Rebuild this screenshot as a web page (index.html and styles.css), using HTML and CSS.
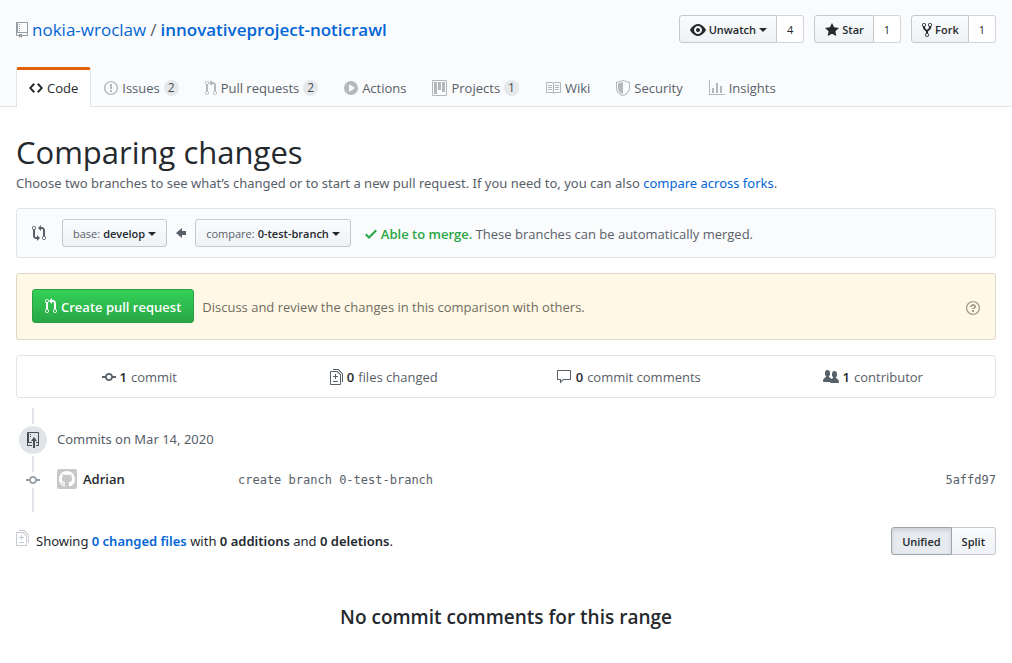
FILE: index.html
```html
<!DOCTYPE html>
<html lang="en">
<head>
<meta charset="utf-8">
<meta name="viewport" content="width=device-width, initial-scale=1">
<title>Comparing develop...0-test-branch</title>
<link rel="stylesheet" href="styles.css">
</head>
<body>
<svg class="sprite" aria-hidden="true">
  <symbol id="pull" viewBox="0 0 12 16"><path d="M11 11.28V5c-.03-.78-.34-1.47-.94-2.06C9.46 2.35 8.78 2.03 8 2H7V0L4 3l3 3V4h1c.27.02.48.11.69.31.21.2.3.42.31.69v6.28A1.993 1.993 0 0010 15a1.993 1.993 0 001-3.72zm-1 2.92c-.66 0-1.2-.55-1.2-1.2 0-.65.55-1.2 1.2-1.2.65 0 1.2.55 1.2 1.2 0 .65-.55 1.2-1.2 1.2zM4 3c0-1.11-.89-2-2-2a1.993 1.993 0 00-1 3.72v6.56A1.993 1.993 0 002 15a1.993 1.993 0 001-3.72V4.72c.59-.34 1-.98 1-1.72zm-.8 10c0 .66-.55 1.2-1.2 1.2-.65 0-1.2-.55-1.2-1.2 0-.65.55-1.2 1.2-1.2.65 0 1.2.55 1.2 1.2zM2 4.2C1.34 4.2.8 3.65.8 3c0-.65.55-1.2 1.2-1.2.65 0 1.2.55 1.2 1.2 0 .65-.55 1.2-1.2 1.2z"/></symbol>
  <symbol id="commit" viewBox="0 0 14 16"><path d="M10.86 7c-.45-1.72-2-3-3.86-3-1.86 0-3.41 1.28-3.86 3H0v2h3.14c.45 1.72 2 3 3.86 3 1.86 0 3.41-1.28 3.86-3H14V7h-3.14zM7 10.2c-1.22 0-2.2-.98-2.2-2.2 0-1.22.98-2.2 2.2-2.2 1.22 0 2.2.98 2.2 2.2 0 1.22-.98 2.2-2.2 2.2z"/></symbol>
  <symbol id="diff" viewBox="0 0 13 16"><path d="M6 7h2v1H6v2H5V8H3V7h2V5h1v2zm-3 6h5v-1H3v1zM7.5 2L11 5.5V15c0 .55-.45 1-1 1H1c-.55 0-1-.45-1-1V3c0-.55.45-1 1-1h6.5zM10 6L7 3H1v12h9V6zM8.5 0H3v1h5l4 4v8h1V4.5L8.5 0z"/></symbol>
</svg>
<header class="page-head">
  <div class="title-row">
    <div class="repo-title">
      <svg class="icon icon-muted" width="12" height="16" viewBox="0 0 12 16" aria-hidden="true"><path d="M4 9H3V8h1v1zm0-3H3v1h1V6zm0-2H3v1h1V4zm0-2H3v1h1V2zm8-1v12c0 .55-.45 1-1 1H6v2l-1.5-1.5L3 16v-2H1c-.55 0-1-.45-1-1V1c0-.55.45-1 1-1h10c.55 0 1 .45 1 1zm-1 10H1v2h2v-1h3v1h5v-2zm0-10H2v9h9V1z"/></svg>
      <a href="#owner">nokia-wroclaw</a><span>/</span><a class="strong" href="#repo">innovativeproject-noticrawl</a>
    </div>
    <div class="repo-actions">
      <div class="btn-group">
        <button class="btn btn-sm" type="button" aria-haspopup="true"><svg class="icon" width="16" height="16" viewBox="0 0 16 16" aria-hidden="true"><path d="M8.06 2C3 2 0 8 0 8s3 6 8.06 6C13 14 16 8 16 8s-3-6-7.94-6zM8 12c-2.2 0-4-1.78-4-4 0-2.2 1.8-4 4-4 2.22 0 4 1.8 4 4 0 2.22-1.78 4-4 4zm2-4c0 1.11-.89 2-2 2-1.11 0-2-.89-2-2 0-1.11.89-2 2-2 1.11 0 2 .89 2 2z"/></svg>Unwatch<span class="caret"></span></button>
        <a class="count" href="#watchers">4</a>
      </div>
      <div class="btn-group">
        <button class="btn btn-sm" type="button"><svg class="icon" width="14" height="16" viewBox="0 0 14 16" aria-hidden="true"><path d="M14 6l-4.9-.64L7 1 4.9 5.36 0 6l3.6 3.26L2.67 14 7 11.67 11.33 14l-.93-4.74L14 6z"/></svg>Star</button>
        <a class="count" href="#stars">1</a>
      </div>
      <div class="btn-group">
        <button class="btn btn-sm" type="button"><svg class="icon" width="10" height="16" viewBox="0 0 10 16" aria-hidden="true"><path d="M8 1a1.993 1.993 0 00-1 3.72V6L5 8 3 6V4.72A1.993 1.993 0 002 1a1.993 1.993 0 00-1 3.72V6.5l3 3v1.78A1.993 1.993 0 005 15a1.993 1.993 0 001-3.72V9.5l3-3V4.72A1.993 1.993 0 008 1zM2 4.2C1.34 4.2.8 3.65.8 3c0-.65.55-1.2 1.2-1.2.65 0 1.2.55 1.2 1.2 0 .65-.55 1.2-1.2 1.2zm3 10c-.66 0-1.2-.55-1.2-1.2 0-.65.55-1.2 1.2-1.2.65 0 1.2.55 1.2 1.2 0 .65-.55 1.2-1.2 1.2zm3-10c-.66 0-1.2-.55-1.2-1.2 0-.65.55-1.2 1.2-1.2.65 0 1.2.55 1.2 1.2 0 .65-.55 1.2-1.2 1.2z"/></svg>Fork</button>
        <a class="count" href="#forks">1</a>
      </div>
    </div>
  </div>
  <nav class="tabs" aria-label="Repository">
    <a class="tab current" href="#code" aria-current="page"><svg class="icon" width="14" height="16" viewBox="0 0 14 16" aria-hidden="true"><path d="M9.5 3L8 4.5 11.5 8 8 11.5 9.5 13 14 8 9.5 3zm-5 0L0 8l4.5 5L6 11.5 2.5 8 6 4.5 4.5 3z"/></svg>Code</a>
    <a class="tab" href="#issues"><svg class="icon" width="14" height="16" viewBox="0 0 14 16" aria-hidden="true"><path d="M7 2.3c3.14 0 5.7 2.56 5.7 5.7s-2.56 5.7-5.7 5.7A5.71 5.71 0 011.3 8c0-3.14 2.56-5.7 5.7-5.7zM7 1C3.14 1 0 4.14 0 8s3.14 7 7 7 7-3.14 7-7-3.14-7-7-7zm1 3H6v5h2V4zm0 6H6v2h2v-2z"/></svg>Issues<span class="counter">2</span></a>
    <a class="tab" href="#pulls"><svg class="icon" width="12" height="16" aria-hidden="true"><use href="#pull"/></svg>Pull requests<span class="counter">2</span></a>
    <a class="tab" href="#actions"><svg class="icon" width="14" height="16" viewBox="0 0 14 16" aria-hidden="true"><path d="M14 8A7 7 0 110 8a7 7 0 0114 0zm-8.223 3.482l4.599-3.066a.5.5 0 000-.832L5.777 4.518A.5.5 0 005 4.934v6.132a.5.5 0 00.777.416z" fill-rule="evenodd"/></svg>Actions</a>
    <a class="tab" href="#projects"><svg class="icon" width="15" height="16" viewBox="0 0 15 16" aria-hidden="true"><path fill-rule="evenodd" d="M10 12h3V2h-3v10zm-4-2h3V2H6v8zm-4 4h3V2H2v12zm-1 1h13V1H1v14zM14 0H1a1 1 0 00-1 1v14a1 1 0 001 1h13a1 1 0 001-1V1a1 1 0 00-1-1z"/></svg>Projects<span class="counter">1</span></a>
    <a class="tab" href="#wiki"><svg class="icon" width="16" height="16" viewBox="0 0 16 16" aria-hidden="true"><path fill-rule="evenodd" d="M3 5h4v1H3V5zm0 3h4V7H3v1zm0 2h4V9H3v1zm11-5h-4v1h4V5zm0 2h-4v1h4V7zm0 2h-4v1h4V9zm2-6v9c0 .55-.45 1-1 1H9.5l-1 1-1-1H2c-.55 0-1-.45-1-1V3c0-.55.45-1 1-1h5.5l1 1 1-1H15c.55 0 1 .45 1 1zm-8 .5L7.5 3H2v9h6V3.5zm7-.5H9.5l-.5.5V12h6V3z"/></svg>Wiki</a>
    <a class="tab" href="#security"><svg class="icon" width="14" height="16" viewBox="0 0 14 16" aria-hidden="true"><path fill-rule="evenodd" d="M0 2l7-2 7 2v6.02C14 12.69 8.69 16 7 16c-1.69 0-7-3.31-7-7.98V2zm1 .75L7 1l6 1.75v5.268C13 12.104 8.449 15 7 15c-1.449 0-6-2.896-6-6.982V2.75zm1 .75L7 2v12c-1.207 0-5-2.482-5-5.985V3.5z"/></svg>Security</a>
    <a class="tab" href="#insights"><svg class="icon" width="16" height="16" viewBox="0 0 16 16" aria-hidden="true"><path d="M16 14v1H0V0h1v14h15zM5 13H3V8h2v5zm4 0H7V3h2v10zm4 0h-2V6h2v7z"/></svg>Insights</a>
  </nav>
</header>
<main class="content">
  <h1 class="heading">Comparing changes</h1>
  <p class="lead">Choose two branches to see what’s changed or to start a new pull request. If you need to, you can also <a href="#forks-compare">compare across forks</a>.</p>

  <section class="range" aria-label="Branches">
    <svg class="icon range-icon" width="14" height="16" viewBox="0 0 14 16" aria-hidden="true"><path d="M5 12H4c-.27-.02-.48-.11-.69-.31-.21-.2-.3-.42-.31-.69V4.72A1.993 1.993 0 002 1a1.993 1.993 0 00-1 3.72V11c.03.78.34 1.47.94 2.06.6.59 1.28.91 2.06.94h1v2l3-3-3-3v2zM2 1.8c.66 0 1.2.55 1.2 1.2 0 .65-.55 1.2-1.2 1.2C1.35 4.2.8 3.65.8 3c0-.65.55-1.2 1.2-1.2zm11 9.48V5c-.03-.78-.34-1.47-.94-2.06-.6-.59-1.28-.91-2.06-.94H9V0L6 3l3 3V4h1c.27.02.48.11.69.31.21.2.3.42.31.69v6.28A1.993 1.993 0 0012 15a1.993 1.993 0 001-3.72zm-1 2.92c-.66 0-1.2-.55-1.2-1.2 0-.65.55-1.2 1.2-1.2.65 0 1.2.55 1.2 1.2 0 .65-.55 1.2-1.2 1.2z"/></svg>
    <button class="btn btn-sm" type="button" aria-haspopup="true"><span class="label">base:</span>develop<span class="caret"></span></button>
    <svg class="icon range-arrow" width="10" height="16" viewBox="0 0 10 16" aria-hidden="true"><path d="M6 3L0 8l6 5v-3h4V6H6V3z"/></svg>
    <button class="btn btn-sm" type="button" aria-haspopup="true"><span class="label">compare:</span>0-test-branch<span class="caret"></span></button>
    <p class="merge"><svg class="icon" width="12" height="16" viewBox="0 0 12 16" aria-hidden="true"><path d="M12 5l-8 8-4-4 1.5-1.5L4 10l6.5-6.5L12 5z"/></svg><span><strong class="ok">Able to merge.</strong> These branches can be automatically merged.</span></p>
  </section>

  <section class="create" aria-label="Create pull request">
    <button class="btn btn-primary" type="button"><svg class="icon" width="12" height="16" aria-hidden="true"><use href="#pull"/></svg>Create pull request</button>
    <p class="create-text">Discuss and review the changes in this comparison with others.</p>
    <a class="help" href="#help" aria-label="About pull requests"><svg class="icon" width="14" height="16" viewBox="0 0 14 16" aria-hidden="true"><path fill-rule="evenodd" d="M6 10h2v2H6v-2zm4-3.5C10 8.64 8 9 8 9H6c0-.55.45-1 1-1h.5c.28 0 .5-.22.5-.5v-1c0-.28-.22-.5-.5-.5h-1c-.28 0-.5.22-.5.5V7H4c0-1.5 1.5-3 3-3s3 1 3 2.5zM7 2.3c3.14 0 5.7 2.56 5.7 5.7s-2.56 5.7-5.7 5.7A5.71 5.71 0 011.3 8c0-3.14 2.56-5.7 5.7-5.7zM7 1C3.14 1 0 4.14 0 8s3.14 7 7 7 7-3.14 7-7-3.14-7-7-7z"/></svg></a>
  </section>

  <ul class="stats">
    <li><a href="#commits"><svg class="icon" width="14" height="16" aria-hidden="true"><use href="#commit"/></svg><strong>1</strong>commit</a></li>
    <li><a href="#files"><svg class="icon" width="13" height="16" aria-hidden="true"><use href="#diff"/></svg><strong>0</strong>files changed</a></li>
    <li><a href="#comments"><svg class="icon" width="16" height="16" viewBox="0 0 16 16" aria-hidden="true"><path fill-rule="evenodd" d="M14 1H2c-.55 0-1 .45-1 1v8c0 .55.45 1 1 1h2v3.5L7.5 11H14c.55 0 1-.45 1-1V2c0-.55-.45-1-1-1zm0 9H7l-2 2v-2H2V2h12v8z"/></svg><strong>0</strong>commit comments</a></li>
    <li><a href="#contributors"><svg class="icon" width="16" height="16" viewBox="0 0 16 16" aria-hidden="true"><path d="M16 12.999c0 .439-.45 1-1 1H7.995c-.539 0-.994-.447-.995-.999H1c-.54 0-1-.561-1-1 0-2.634 3-4 3-4s.229-.409 0-1c-.841-.621-1.058-.59-1-3 .058-2.419 1.367-3 2.5-3s2.442.58 2.5 3c.058 2.41-.159 2.379-1 3-.229.59 0 1 0 1s1.549.711 2.42 2.088C9.196 9.369 10 8.999 10 8.999s.229-.409 0-1c-.841-.62-1.058-.59-1-3 .058-2.419 1.367-3 2.5-3s2.437.581 2.495 3c.059 2.41-.158 2.38-1 3-.229.59 0 1 0 1s3.005 1.366 3.005 4z"/></svg><strong>1</strong>contributor</a></li>
  </ul>

  <section class="timeline" aria-label="Commits">
    <div class="rail" aria-hidden="true">
      <span class="line"></span>
      <span class="dot"><svg class="icon" width="12" height="16" viewBox="0 0 12 16"><path d="M4 3H3V2h1v1zM3 5h1V4H3v1zm4 0L4 9h2v7h2V9h2L7 5zm4-5H1C.45 0 0 .45 0 1v12c0 .55.45 1 1 1h4v-1H1v-2h4v-1H2V1h9.02L11 10H9v1h2v2H9v1h2c.55 0 1-.45 1-1V1c0-.55-.45-1-1-1z"/></svg></span>
      <span class="line"></span>
      <svg class="icon node" width="14" height="12" viewBox="0 2 14 12"><path d="M10.86 7c-.45-1.72-2-3-3.86-3-1.86 0-3.41 1.28-3.86 3H0v2h3.14c.45 1.72 2 3 3.86 3 1.86 0 3.41-1.28 3.86-3H14V7h-3.14zM7 10.2c-1.22 0-2.2-.98-2.2-2.2 0-1.22.98-2.2 2.2-2.2 1.22 0 2.2.98 2.2 2.2 0 1.22-.98 2.2-2.2 2.2z"/></svg>
      <span class="line line-long"></span>
    </div>
    <div class="commits">
      <h2 class="day">Commits on Mar 14, 2020</h2>
      <div class="commit">
        <div class="author">
          <svg class="avatar" width="20" height="20" viewBox="0 0 20 20" aria-hidden="true"><rect width="20" height="20" rx="2"/><path transform="translate(2 2)" d="M8 0C3.58 0 0 3.58 0 8c0 3.54 2.29 6.53 5.47 7.59.4.07.55-.17.55-.38 0-.19-.01-.82-.01-1.49-2.01.37-2.53-.49-2.69-.94-.09-.23-.48-.94-.82-1.13-.28-.15-.68-.52-.01-.53.63-.01 1.08.58 1.23.82.72 1.21 1.87.87 2.33.66.07-.52.28-.87.51-1.07-1.78-.2-3.64-.89-3.64-3.95 0-.87.31-1.59.82-2.15-.08-.2-.36-1.02.08-2.12 0 0 .67-.21 2.2.82.64-.18 1.32-.27 2-.27.68 0 1.36.09 2 .27 1.53-1.04 2.2-.82 2.2-.82.44 1.1.16 1.92.08 2.12.51.56.82 1.27.82 2.15 0 3.07-1.87 3.75-3.65 3.95.29.25.54.73.54 1.48 0 1.07-.01 1.93-.01 2.2 0 .21.15.46.55.38A8.013 8.013 0 0016 8c0-4.42-3.58-8-8-8z"/></svg>
          <strong>Adrian</strong>
        </div>
        <a class="mono" href="#message">create branch 0-test-branch</a>
        <a class="mono" href="#sha">5affd97</a>
      </div>
    </div>
  </section>

  <section class="toolbar" aria-label="Diff summary">
    <svg class="icon toolbar-icon" width="13" height="16" aria-hidden="true"><use href="#diff"/></svg>
    <p>Showing <a class="strong" href="#changed">0 changed files</a> with <strong>0 additions</strong> and <strong>0 deletions</strong>.</p>
    <div class="btn-group view-switch">
      <button class="btn btn-sm selected" type="button" aria-pressed="true">Unified</button>
      <button class="btn btn-sm" type="button" aria-pressed="false">Split</button>
    </div>
  </section>

  <h2 class="empty">No commit comments for this range</h2>
</main>
</body>
</html>
```
FILE: styles.css
```css
* { box-sizing: border-box; }
body {
  margin: 0;
  background: #fff;
  color: #24292e;
  font: 13px/20px "Open Sans", "Noto Sans", sans-serif;
}
h1, h2, p, ul { margin: 0; padding: 0; }
a { color: #0366d6; text-decoration: none; }
strong, .strong { font-weight: 600; }
.sprite { display: none; }
.icon { flex: none; fill: currentColor; }
.icon-muted { color: #959da5; }

.page-head { background: #fafbfc; border-bottom: 1px solid #e1e4e8; }
.title-row {
  display: flex;
  justify-content: space-between;
  padding: 15px 16px 24px;
}
.repo-title {
  display: flex;
  align-items: center;
  gap: 4px;
  padding-top: 2px;
  color: #586069;
  font-size: 17px;
  line-height: 26px;
}
.repo-actions { display: flex; gap: 10px; }
.btn-group { display: flex; }

.btn {
  display: flex;
  align-items: center;
  gap: 4px;
  border: 1px solid #c5c9cd;
  border-radius: 3px;
  background: linear-gradient(#fafbfc, #eff3f6);
  color: #24292e;
  font: 600 13px/20px "Open Sans", "Noto Sans", sans-serif;
  white-space: nowrap;
}
.btn-sm { gap: 3px; padding: 4px 10px 2px; font-size: 11px; }
.btn .label { color: #586069; font-weight: 400; }
.caret {
  border: 4px solid transparent;
  border-top-color: currentColor;
  border-bottom: 0;
}
.btn-group .btn:first-child { border-radius: 3px 0 0 3px; }
.repo-actions .btn { padding-right: 9px; }
.count {
  padding: 4px 10px 2px;
  border: 1px solid #d1d5da;
  border-left: 0;
  border-radius: 0 3px 3px 0;
  background: #fff;
  color: #24292e;
  font-size: 11px;
  font-weight: 500;
}

.tabs { display: flex; padding: 0 16px; margin-bottom: -1px; }
.tab {
  display: flex;
  align-items: center;
  gap: 4px;
  padding: 8px 12px 9px;
  border: 1px solid transparent;
  border-top: 3px solid transparent;
  border-bottom: 0;
  color: #586069;
  line-height: 20px;
  white-space: nowrap;
}
.tab .icon { color: #b4b8bc; }
.tab.current {
  border-color: #e36209 #e1e4e8 transparent;
  border-radius: 3px 3px 0 0;
  background: #fff;
  color: #24292e;
}
.tab.current .icon { color: inherit; }
.counter {
  padding: 0 4px;
  border-radius: 20px;
  background: #e6e8ea;
  color: #444d56;
  font-size: 12px;
  font-weight: 500;
  line-height: 16px;
}

.content { padding: 25px 16px 32px; }
.heading { font-size: 31px; font-weight: 400; line-height: 40px; }
.lead { margin-top: 1px; color: #586069; }
.lead, .day, .toolbar p { font-family: "Noto Sans", "Open Sans", sans-serif; }

.range {
  display: flex;
  align-items: center;
  margin-top: 15px;
  padding: 10px 15px;
  border: 1px solid #e1e4e8;
  border-radius: 3px;
  background: #fafbfc;
  color: #586069;
}
.range-icon { margin-right: 16px; }
.range-arrow { margin: 0 9px; }
.merge {
  display: flex;
  align-items: center;
  gap: 4px;
  margin-left: 14px;
  padding-top: 2px;
}
.merge .icon, .ok { color: #28a745; }

.create {
  display: flex;
  align-items: center;
  gap: 8px;
  margin-top: 15px;
  padding: 15px 15px 16px;
  border: 1px solid #dfd8c2;
  border-radius: 3px;
  background: #fff8e7;
  color: #6f6d60;
}
.btn-primary {
  padding: 7px 12px 5px;
  border-color: #28a043;
  background: linear-gradient(#34d058, #28a745);
  color: #fff;
}
.btn-primary .icon { margin-bottom: 2px; }
.create-text { flex: 1; padding-top: 2px; }
.help { display: flex; padding-top: 4px; color: #a39e86; }

.stats {
  display: grid;
  grid-template-columns: repeat(4, 1fr);
  margin-top: 15px;
  border: 1px solid #e1e4e8;
  border-radius: 3px;
  list-style: none;
}
.stats a {
  display: flex;
  align-items: center;
  justify-content: center;
  gap: 4px;
  padding: 11px 0 10px;
  color: #586069;
}
.stats strong { color: #24292e; }

.timeline { display: flex; gap: 7px; margin-top: 10px; }
.rail {
  display: flex;
  flex-direction: column;
  align-items: center;
  gap: 2px;
  width: 34px;
}
.line { width: 2px; height: 16px; background: #e1e4e8; }
.line-long { height: 24px; }
.dot {
  display: flex;
  align-items: center;
  justify-content: center;
  width: 28px;
  height: 28px;
  border-radius: 50%;
  background: #e1e4e8;
  color: #444d56;
}
.node { color: #959da5; }
.commits { flex: 1; padding-top: 21px; }
.day { color: #586069; font-size: 13px; font-weight: 400; line-height: 20px; }
.commit {
  display: grid;
  grid-template-columns: 181px 1fr auto;
  align-items: center;
  margin-top: 19px;
}
.author { display: flex; align-items: center; gap: 6px; }
.avatar { fill: #fff; }
.avatar rect { fill: #c8c8c8; }
.mono { padding-top: 2px; color: #586069; font: 12px/20px "DejaVu Sans Mono", monospace; }

.toolbar { display: flex; align-items: center; gap: 7px; margin-top: 15px; }
.toolbar-icon { align-self: flex-start; margin-top: 3px; color: #c6cbd1; }
.view-switch { margin-left: auto; }
.view-switch .btn:last-child { border-left: 0; border-radius: 0 3px 3px 0; }
.view-switch .selected {
  border-color: #9fa4a9;
  background: #e7ebef;
  box-shadow: inset 0 2px 4px rgba(27, 31, 35, 0.15);
}

.empty {
  margin-top: 47px;
  font-size: 19px;
  font-weight: 600;
  line-height: 30px;
  text-align: center;
}
```
